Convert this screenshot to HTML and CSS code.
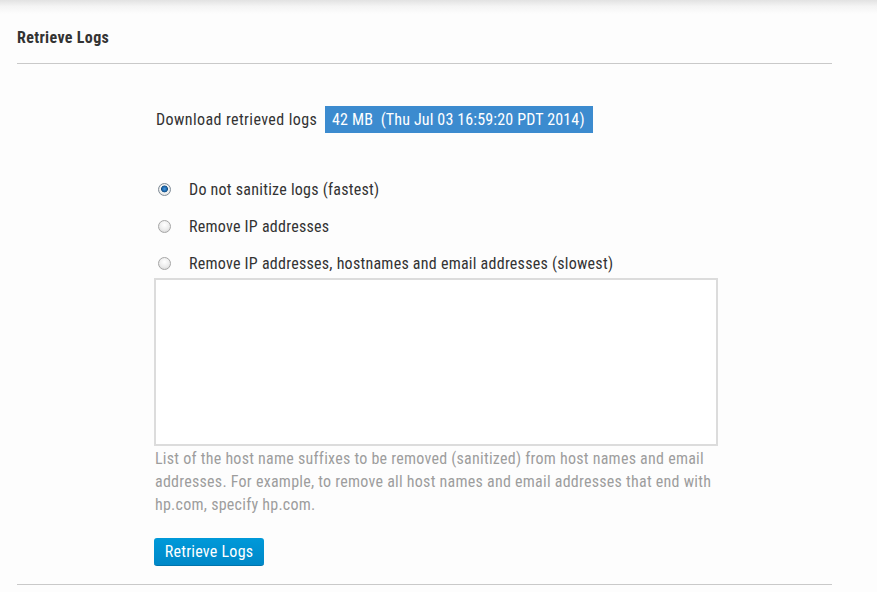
FILE: index.html
```html
<!DOCTYPE html>
<html>
<head>
<meta charset="utf-8">
<link rel="stylesheet" href="styles.css">
</head>
<body>
<div class="topshade"></div>
<section class="panel">
  <h2 class="panel-title">Retrieve Logs</h2>
  <div class="panel-body">
    <div class="download-row">
      <span class="download-label">Download retrieved logs</span>
      <a class="download-link" href="#">42 MB&nbsp; (Thu Jul 03 16:59:20 PDT 2014)</a>
    </div>
    <div class="options">
      <label class="option"><span class="radio checked"></span><span>Do not sanitize logs (fastest)</span></label>
      <label class="option"><span class="radio"></span><span>Remove IP addresses</span></label>
      <label class="option"><span class="radio"></span><span>Remove IP addresses, hostnames and email addresses (slowest)</span></label>
    </div>
    <textarea class="suffixes"></textarea>
    <p class="help">List of the host name suffixes to be removed (sanitized) from host names and email addresses. For example, to remove all host names and email addresses that end with hp.com, specify hp.com.</p>
    <button class="btn-primary">Retrieve Logs</button>
  </div>
</section>
</body>
</html>
```
FILE: styles.css
```css
html, body {
  margin: 0;
  padding: 0;
  background: #fdfdfd;
}
body {
  font-family: "Roboto Condensed", "Liberation Sans", Arial, sans-serif;
  color: #333;
  height: 592px;
  overflow: hidden;
  letter-spacing: 0.25px;
}
.topshade {
  height: 14px;
  background: linear-gradient(to bottom, #e2e2e2 0%, #f4f4f4 45%, #fdfdfd 100%);
}
.panel {
  margin-left: 17px;
  width: 815px;
}
.panel-title {
  margin: 0;
  padding-top: 14px;
  height: 35px;
  box-sizing: content-box;
  font-family: "Roboto Condensed", "Liberation Sans", sans-serif;
  font-weight: 700;
  font-size: 16px;
  letter-spacing: 0.35px;
  line-height: 20px;
  color: #333;
  border-bottom: 1px solid #c9c9c9;
}
.panel-body {
  padding-left: 137px;
  padding-top: 42px;
  padding-bottom: 18px;
  border-bottom: 1px solid #c9c9c9;
}
.download-row {
  display: flex;
  align-items: center;
  height: 27px;
}
.download-label {
  font-size: 16px;
  letter-spacing: 0.4px;
  color: #333;
  padding-left: 2px;
  width: 169px;
}
.download-link {
  display: inline-flex;
  align-items: center;
  height: 27px;
  width: 268px;
  box-sizing: border-box;
  padding-left: 7px;
  background: #3c8bcf;
  color: #fff;
  font-size: 16px;
  letter-spacing: 0.15px;
  text-decoration: none;
}
.options {
  display: flex;
  flex-direction: column;
  gap: 13px;
  margin-top: 44px;
}
.option {
  display: flex;
  align-items: center;
  height: 24px;
  font-size: 16px;
  color: #333;
}
.radio {
  width: 13px;
  height: 13px;
  box-sizing: border-box;
  border-radius: 50%;
  border: 1px solid #a6a6a6;
  background: radial-gradient(circle at 50% 35%, #ffffff 0%, #ececec 55%, #cfcfcf 100%);
  margin-left: 4px;
  margin-right: 18px;
}
.radio.checked {
  border-color: #7f8b96;
  background: radial-gradient(circle at 50% 45%, #4a9be0 0%, #1a62a8 30%, #15507f 38%, #f4f4f4 46%, #dcdcdc 90%);
}
.suffixes {
  display: block;
  margin-top: 3px;
  width: 564px;
  height: 168px;
  box-sizing: border-box;
  border: 2px solid #dcdcdc;
  background: #fff;
  resize: none;
  padding: 4px;
  font-family: inherit;
}
.help {
  margin: 0;
  padding-top: 1px;
  padding-left: 1px;
  width: 570px;
  font-size: 16px;
  line-height: 23px;
  color: #9d9d9d;
}
.btn-primary {
  display: block;
  margin-top: 22px;
  width: 110px;
  height: 28px;
  padding: 0;
  border: none;
  border-radius: 3px;
  border-bottom: 1px solid #0074ac;
  background: linear-gradient(to bottom, #0099d9 0%, #0088c8 100%);
  color: #fff;
  font-family: inherit;
  font-size: 16px;
  letter-spacing: 0.25px;
  cursor: pointer;
}
```
